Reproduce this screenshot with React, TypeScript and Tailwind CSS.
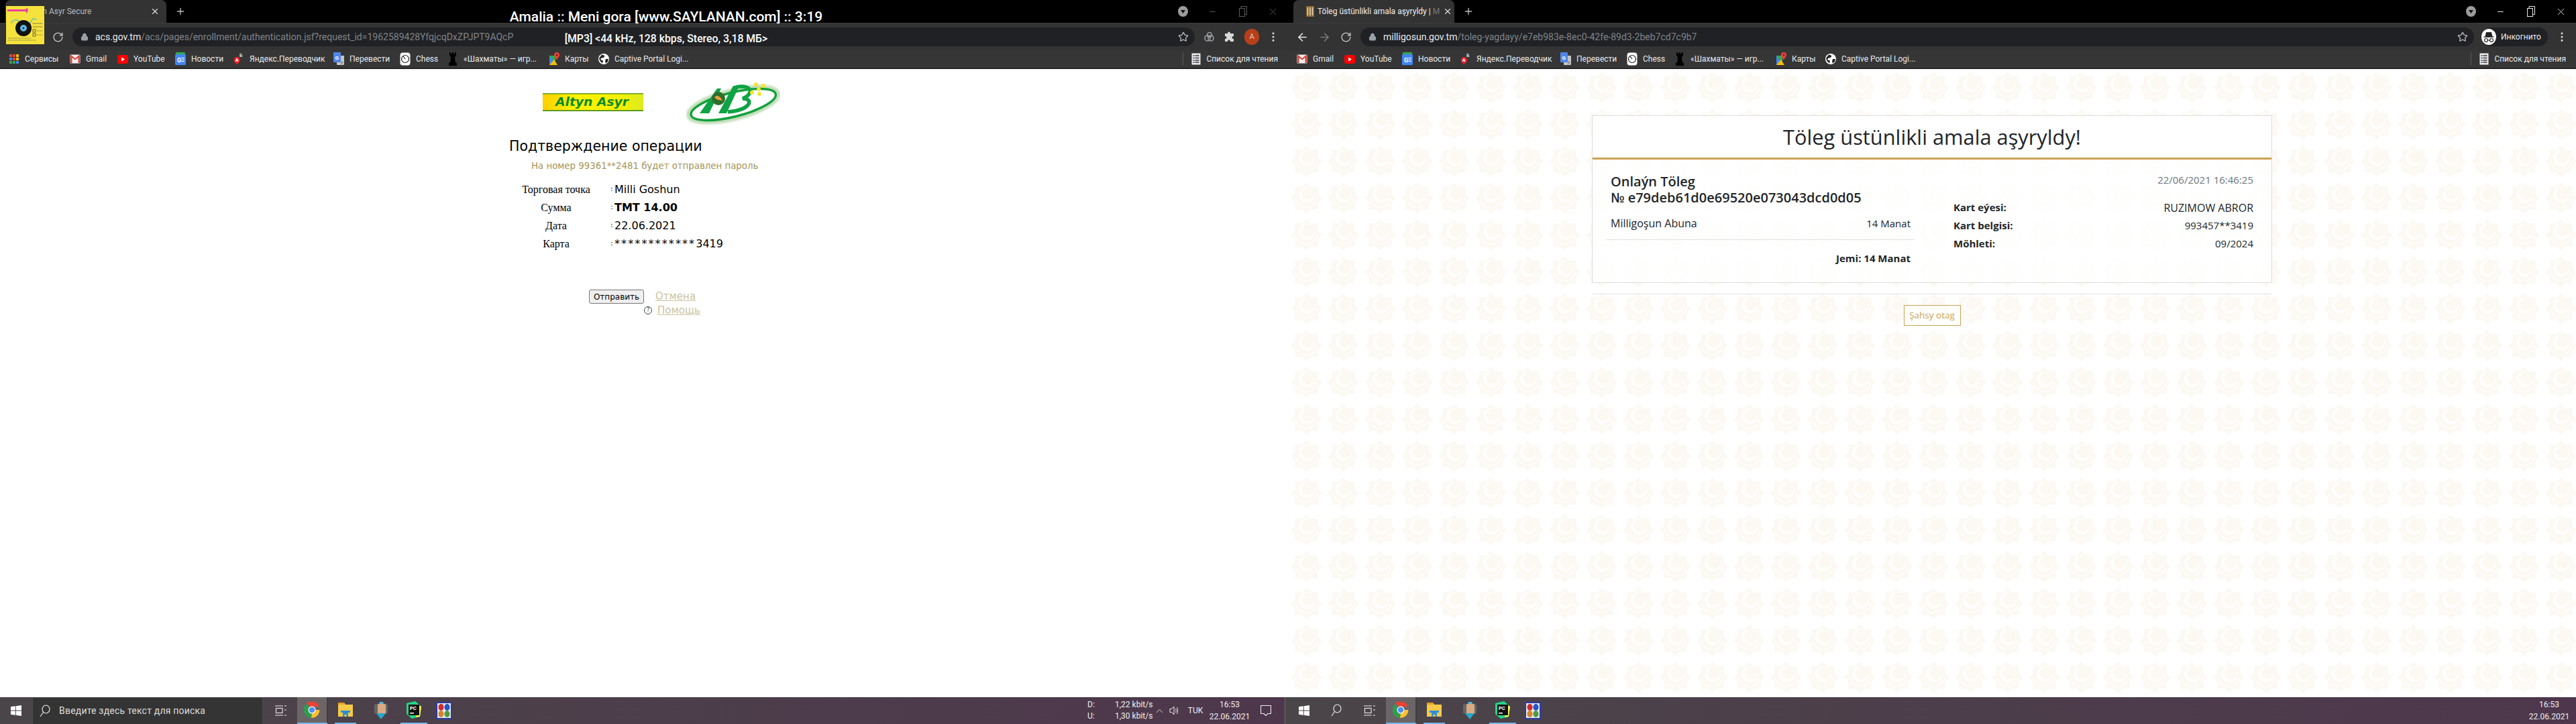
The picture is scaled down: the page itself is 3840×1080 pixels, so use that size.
import React from "react";
import { ArrowLeft, ArrowRight, RotateCw, Star, Lock, X, Plus, Minus, EllipsisVertical, ChevronUp } from "lucide-react";

const Apps = () => (
  <svg width="16" height="16" viewBox="0 0 16 16">
    {[["#ea4335", "#ea4335", "#fbbc05"], ["#4285f4", "#ea4335", "#fbbc05"], ["#34a853", "#34a853", "#4285f4"]].map((r, y) =>
      r.map((c, x) => <rect key={x} x={1 + x * 5} y={1 + y * 5} width="4" height="4" fill={c} />)
    )}
  </svg>
);
const Gmail = () => (
  <svg width="16" height="14" viewBox="0 0 16 14">
    <rect x="0.5" y="0.5" width="15" height="13" rx="1" fill="#f3eeee" />
    <path d="M1 1v12h2.5V5L8 8.5 12.5 5v8H15V1h-1L8 6 2 1z" fill="#d9453b" />
  </svg>
);
const YouTube = () => (
  <svg width="16" height="13" viewBox="0 0 16 13">
    <rect width="16" height="13" rx="3" fill="#f00" />
    <path d="M6.2 3.5 11 6.5l-4.8 3z" fill="#fff" />
  </svg>
);
const News = () => (
  <svg width="16" height="20" viewBox="0 0 16 20">
    <rect x="1" y="0" width="14" height="6" rx="1" fill="#34a853" />
    <rect y="3" width="16" height="16" rx="1.5" fill="#4285f4" />
    <text x="3" y="14.5" fontSize="9" fontWeight="700" fill="#fff" fontFamily="Roboto, sans-serif">G</text>
    <path d="M9.5 8.5h4.5M9.5 11h4.5M9.5 13.5h4.5" stroke="#fff" strokeWidth="1.2" />
  </svg>
);
const Yandex = () => (
  <svg width="18" height="20" viewBox="0 0 18 20">
    <path d="M6 6.5a5.2 5.2 0 0 1 5.2 5.2c0 3-3 5.3-5.2 8-2.2-2.700-5.200-5-5.200-8A5.200 5.200 0 0 1 6 6.500z" fill="#ed1c24" />
    <text x="3" y="14.500" fontSize="8" fontWeight="700" fill="#fff" fontFamily="Roboto, sans-serif">A</text>
    <text x="10" y="7" fontSize="8" fontWeight="700" fill="#ddd" fontFamily="Roboto, sans-serif">Б</text>
  </svg>
);
const GTranslate = () => (
  <svg width="16" height="20" viewBox="0 0 16 20">
    <rect x="5" y="5" width="11" height="14" rx="1" fill="#c5c5c5" />
    <rect y="0" width="11" height="15" rx="1" fill="#4f86ec" />
    <text x="2.500" y="10.500" fontSize="8" fontWeight="700" fill="#fff" fontFamily="Roboto, sans-serif">G</text>
    <text x="10" y="16.500" fontSize="5" fill="#666" fontFamily="'Noto Sans CJK SC', sans-serif">文</text>
  </svg>
);
const Chess = () => (
  <svg width="16" height="20" viewBox="0 0 16 20">
    <rect x="0.500" y="0.500" width="15" height="19" rx="4" fill="#fff" />
    <circle cx="8" cy="10" r="5.500" fill="none" stroke="#222" strokeWidth="1.200" />
    <path d="M8 10 5 6" stroke="#222" strokeWidth="1.200" />
  </svg>
);
const Rook = () => (
  <svg width="16" height="22" viewBox="0 0 16 22">
    <path d="M3 1h2v2h2V1h2v2h2V1h2v5l-2 2 .6 8H13l1 2v3H2v-3l1-2h1.400L5 8 3 6z" fill="#000" />
  </svg>
);
const Maps = () => (
  <svg width="16" height="20" viewBox="0 0 16 20">
    <path d="M1 5h9v14H1z" fill="#34a853" />
    <path d="M1 5l9 14H1z" fill="#4285f4" />
    <path d="M1 19l7-8 5 8z" fill="#fbbc05" />
    <path d="M12 0a4 4 0 0 1 4 4c0 2.500-2.500 4-4 8-1.500-4-4-5.500-4-8a4 4 0 0 1 4-4z" fill="#ea4335" />
    <circle cx="12" cy="4" r="1.400" fill="#7a1c14" />
  </svg>
);
const Globe = () => (
  <svg width="16" height="16" viewBox="0 0 16 16">
    <circle cx="8" cy="8" r="8" fill="#fff" />
    <path d="M5 1.500 9.500 3 8 6 4.500 6.500 3 9 7 10.500 6 14.500 2.500 11 1 7zM11 8h4l-1 4-3 2.500-1-3z" fill="#222" />
  </svg>
);
const ReadingList = () => (
  <svg width="14" height="18" viewBox="0 0 14 18">
    <rect x="0.500" y="0.500" width="13" height="17" fill="#e8eaed" />
    <path d="M2.500 4h2M5.500 4h6M2.500 7.500h2M5.500 7.500h6M2.500 11h2M5.500 11h6M2.500 14h2M5.500 14h6" stroke="#333" strokeWidth="1.300" />
  </svg>
);
const Cover = () => (
  <svg width="57" height="57" viewBox="0 0 57 57">
    <rect width="57" height="57" fill="#f5e23c" />
    <path d="M2 5h27l2-2 2 2-1 3-1 3-2-3H2z" fill="#ee3fa2" />
    <path d="M8 26c2-7 8-6 12-3M46 20l-6-1-5 8" fill="none" stroke="#49b8c9" strokeWidth="1.200" />
    <circle cx="26" cy="33" r="12" fill="#111" />
    <circle cx="26" cy="33" r="5" fill="#5cb6e0" />
    <circle cx="26" cy="33" r="1.200" fill="#111" />
    <path d="M40 26h15M40 31h15" stroke="#444" strokeWidth="1" strokeDasharray="1.500 1" />
    <rect x="40" y="35" width="4" height="4" fill="none" stroke="#333" strokeWidth=".7" />
    <rect x="40" y="41" width="4" height="4" fill="none" stroke="#333" strokeWidth=".7" />
    <path d="M46 37h9M46 43h9M3 48h34M3 51h42" stroke="#665" strokeWidth=".8" strokeDasharray="1.500 .8" />
  </svg>
);
const Favicon = () => (
  <svg width="12" height="16" viewBox="0 0 12 16">
    <rect width="12" height="16" fill="#8d6a33" />
    <path d="M2.500 2v12M6 2v12M9.500 2v12" stroke="#f0e4c8" strokeWidth="1.300" />
  </svg>
);
const ExtIcon = () => (
  <svg width="17" height="17" viewBox="0 0 17 17" fill="none" stroke="#9aa0a6" strokeWidth="1.600">
    <circle cx="6" cy="10" r="4" />
    <circle cx="11" cy="10" r="4" />
    <circle cx="9" cy="5" r="3.500" />
  </svg>
);
const Puzzle = () => (
  <svg width="16" height="16" viewBox="0 0 16 16">
    <path d="M5 2.500a2 2 0 0 1 4 0V3h5v4h-.5a2 2 0 0 0 0 4h.5v4H9v-.5a2 2 0 0 0-4 0v.5H1v-4h.5a2 2 0 0 0 0-4H1V3h4z" fill="#d8d8d8" />
  </svg>
);
const Restore = () => (
  <svg width="12" height="16" viewBox="0 0 12 16" fill="none" stroke="currentColor" strokeWidth="1">
    <rect x="0.500" y="3.500" width="8" height="12" />
    <path d="M3 3V.5h8.500v12H9" />
  </svg>
);
const TitleDrop = () => (
  <svg width="15" height="16" viewBox="0 0 15 16">
    <ellipse cx="7.500" cy="8" rx="7.500" ry="8" fill="#9c9c9c" />
    <path d="M4 6h7l-3.500 5z" fill="#111" />
  </svg>
);
const Incognito = () => (
  <svg width="22" height="24" viewBox="0 0 22 24">
    <ellipse cx="11" cy="12" rx="11" ry="12" fill="#fff" />
    <path d="M7 5h8l1.500 6.500h-11zM3.500 11.500h15v1.300h-15z" fill="#222" />
    <circle cx="7" cy="17" r="2.500" fill="none" stroke="#222" strokeWidth="1.200" />
    <circle cx="15" cy="17" r="2.500" fill="none" stroke="#222" strokeWidth="1.200" />
    <path d="M9.500 17h3" stroke="#222" />
  </svg>
);
const Win = () => (
  <svg width="16" height="16" viewBox="0 0 16 16">
    <path d="M0 2.300 6.800 1.300v6.300H0zM7.700 1.200 16 0v7.600H7.700zM0 8.500h6.800v6.300L0 13.800zM7.700 8.500H16V16l-8.300-1.200z" fill="#fff" />
  </svg>
);
const SearchIco = () => (
  <svg width="16" height="20" viewBox="0 0 16 20" fill="none" stroke="#eee" strokeWidth="1.100">
    <ellipse cx="9.500" cy="7" rx="5.500" ry="6" />
    <path d="M5.500 11.500 1 18" />
  </svg>
);
const TaskView = () => (
  <svg width="18" height="18" viewBox="0 0 18 18" fill="none" stroke="#eee" strokeWidth="1.100">
    <rect x="2.500" y="5.500" width="9.500" height="7" />
    <path d="M1 2h12M1 16h12M15 2h3M15 8h3M15 16h3" />
  </svg>
);
const ChromeIco = () => (
  <svg width="24" height="24" viewBox="0 0 24 24">
    <path d="M12 12 4 1.500A12 12 0 0 1 23 7H12z" fill="#ea4335" />
    <path d="M12 12h11.400A12 12 0 0 1 11 24z" fill="#fbc02d" />
    <path d="M12 12 11 24A12 12 0 0 1 4 3z" fill="#2e9e4f" />
    <circle cx="12" cy="12" r="5.500" fill="#fff" />
    <circle cx="12" cy="12" r="4.300" fill="#4f8df5" />
  </svg>
);
const Explorer = () => (
  <svg width="22" height="24" viewBox="0 0 22 24">
    <path d="M0 1h9l2 3h11v18H0z" fill="#f7c948" />
    <rect y="1" width="9" height="3" fill="#e8a020" />
    <path d="M7 22v-6h8v6h-2.500v-3h-3v3z" fill="#2a8fd8" />
    <rect x="4" y="13" width="14" height="3" fill="#2a8fd8" />
  </svg>
);
const Agent = () => (
  <svg width="22" height="26" viewBox="0 0 22 26">
    <path d="M9 0h5l1 3H8z" fill="#5ab4dc" />
    <rect x="1" y="3" width="20" height="15" rx="3" fill="#666" />
    <rect x="6" y="3" width="12" height="15" rx="2" fill="#d9a984" />
    <path d="M4 17h14l-7 9z" fill="#27a9c9" />
  </svg>
);
const PyCharm = () => (
  <svg width="24" height="26" viewBox="0 0 24 26">
    <path d="M1 3 14 0l9 8-2 15-12 3-8-7z" fill="#21d789" />
    <path d="M16 4l7 4-2 15-6 1z" fill="#fcf84a" />
    <rect x="4" y="5" width="16" height="16" fill="#111" />
    <text x="6" y="13" fontSize="7.500" fontWeight="700" fill="#fff" fontFamily="Roboto, sans-serif">PC</text>
    <rect x="6" y="17" width="6" height="1.500" fill="#fff" />
  </svg>
);
const Colors = () => (
  <svg width="24" height="26" viewBox="0 0 24 26">
    <rect width="24" height="26" rx="2" fill="#2d3aa8" />
    <rect x="2" y="2" width="20" height="22" fill="#e4e8ee" />
    <ellipse cx="7.500" cy="8" rx="4" ry="5" fill="#d42a2a" />
    <ellipse cx="16.500" cy="8" rx="4" ry="5" fill="#2456c8" />
    <ellipse cx="7.500" cy="18" rx="4" ry="5" fill="#d8822a" />
    <ellipse cx="16.500" cy="18" rx="4" ry="5" fill="#4f9a3d" />
  </svg>
);
const Speaker = () => (
  <svg width="16" height="16" viewBox="0 0 16 16" fill="none" stroke="#eee" strokeWidth="1">
    <path d="M1 5.500h2.500L7 2v12l-3.500-3.500H1zM9.500 5c1 2 1 4 0 6M11.500 3c1.500 3 1.500 7 0 10" />
  </svg>
);
const Notif = () => (
  <svg width="16" height="16" viewBox="0 0 16 16" fill="none" stroke="#eee" strokeWidth="1.100">
    <path d="M.5.500h15v12h-4.500L8 15.500 5 12.500H.5z" />
  </svg>
);
const AltynBanner = () => (
  <svg className="block" width="150" height="27" viewBox="0 0 150 27">
    <defs>
      <linearGradient id="ay" x1="0" x2="1" y1="0" y2="0">
        <stop offset="0" stopColor="#ffcf00" />
        <stop offset="0.3" stopColor="#fff200" />
        <stop offset="0.75" stopColor="#f6f000" />
        <stop offset="1" stopColor="#dcec20" />
      </linearGradient>
    </defs>
    <rect width="150" height="27" fill="url(#ay)" />
    <rect width="150" height="1.500" fill="#5d9a1f" />
    <rect y="25" width="150" height="2" fill="#5d9a1f" />
    <text x="19" y="19" fontSize="17" fontWeight="700" fontStyle="italic" fill="#0a8a2c" fontFamily="'DejaVu Sans', sans-serif" textLength="109" lengthAdjust="spacingAndGlyphs">Altyn Asyr</text>
  </svg>
);
const BankLogo = () => (
  <svg className="block" width="140" height="65" viewBox="0 0 140 65">
    <defs>
      <filter id="gl"><feGaussianBlur stdDeviation="1.500" /></filter>
    </defs>
    <g transform="rotate(-14 70 33)">
      <ellipse cx="70" cy="34" rx="69" ry="21" fill="none" stroke="#bfdcb6" strokeWidth="6" filter="url(#gl)" />
      <ellipse cx="70" cy="34" rx="65" ry="18" fill="none" stroke="#12a03c" strokeWidth="3.500" />
    </g>
    <path d="M20 47 46 10h6L34 47z" fill="#0ea344" />
    <path d="M48 47 70 6h9L60 47z" fill="#0ea344" />
    <path d="M74 8C98 3 102 18 84 25C101 25 97 42 62 45" fill="none" stroke="#0ea344" strokeWidth="5.500" />
    <circle cx="48" cy="25" r="10" fill="#2f6d2c" />
    <path d="M42 23c4-4 8-2 12 5-4-1-8 0-12-5z" fill="#e8a23a" />
    <g fill="#f6e62a">
      <circle cx="104" cy="4" r="3" />
      <circle cx="115" cy="6" r="3" />
      <circle cx="108" cy="11" r="3" />
      <circle cx="98" cy="16" r="3" />
      <circle cx="109" cy="18" r="3" />
    </g>
  </svg>
);

const bookmarkList = [
  { i: <Gmail />, t: "Gmail", w: "w-[71px]" },
  { i: <YouTube />, t: "YouTube", w: "w-[86px]" },
  { i: <News />, t: "Новости", w: "w-[87px]" },
  { i: <Yandex />, t: "Яндекс.Переводчик", w: "w-[149px]" },
  { i: <GTranslate />, t: "Перевести", w: "w-[99px]" },
  { i: <Chess />, t: "Chess", w: "w-[71px]" },
  { i: <Rook />, t: "«Шахматы» — игр...", w: "w-[151px]" },
  { i: <Maps />, t: "Карты", w: "w-[74px]" },
  { i: <Globe />, t: "Captive Portal Logi...", w: "w-[135px]" },
];

function Bookmark({ icon, text, w }: { icon: React.ReactNode; text: string; w: string }) {
  return (
    <div className={`${w} flex items-center gap-2 shrink-0`}>
      <span className="w-4 flex justify-center shrink-0">{icon}</span>
      <span className="whitespace-nowrap">{text}</span>
    </div>
  );
}

function Chrome({ right }: { right: boolean }) {
  const ctl = right ? "text-[#e8e8e8]" : "text-[#5c5c5c]";
  return (
    <div className="h-[103px] shrink-0 flex flex-col font-['Roboto',sans-serif] text-[#e8eaed]">
      <div className="h-[34px] bg-black flex items-stretch">
        <div className={`ml-[8px] w-[240px] rounded-t-[8px] bg-[#333333] flex items-center text-[12px] ${right ? "pl-[19px] text-[#eeeeee]" : "pl-[35px] text-[#b8b8b8]"}`}>
          {right && <span className="mr-[5px] shrink-0"><Favicon /></span>}
          <span className="whitespace-nowrap flex-1">
            {right ? <>Töleg üstünlikli amala aşyryldy | <span className="text-[#777777]">M</span></> : "Altyn Asyr Secure"}
          </span>
          <X size={14} className="mr-[10px] ml-[5px] shrink-0 text-[#dddddd]" />
        </div>
        <Plus size={16} className="ml-[13px] self-center text-[#bdbdbd]" />
        <div className={`ml-auto flex items-center ${ctl}`}>
          <TitleDrop />
          <Minus size={13} className="ml-[30px]" />
          <span className="ml-[33px]"><Restore /></span>
          <X size={17} className="ml-[30px] mr-[14px]" strokeWidth={1.2} />
        </div>
      </div>
      <div className="h-[41px] bg-[#333333] border-t border-[#3d3d3d] flex items-center">
        <ArrowLeft size={19} className={`ml-[12px] ${right ? "text-[#e8eaed]" : "text-[#333333]"}`} />
        <ArrowRight size={19} className="ml-[14px] text-[#7a7a7a]" />
        <RotateCw size={17} className="ml-[14px] text-[#c4c4c4]" />
        <div className={`ml-[13px] h-[28px] bg-[#202124] rounded-full flex items-center text-[14px] pl-[12px] ${right ? "w-[1660px]" : "w-[1673px]"}`}>
          <Lock size={12} className="text-[#9aa0a6] mr-[10px]" fill="#9aa0a6" />
          <span className="whitespace-nowrap">
            {right ? "milligosun.gov.tm" : "acs.gov.tm"}
            <span className="text-[#7f8388]">
              {right ? "/toleg-yagdayy/e7eb983e-8ec0-42fe-89d3-2beb7cd7c9b7" : "/acs/pages/enrollment/authentication.jsf?request_id=1962589428YfqjcqDxZPJPT9AQcP"}
            </span>
          </span>
          <Star size={16} className="ml-auto mr-[9px] text-[#b8b8b8]" />
        </div>
        {right ? (
          <>
            <div className="ml-[11px] w-[99px] h-[28px] rounded-full bg-[#202124] flex items-center gap-[7px] text-[12px]">
              <Incognito />
              <span>Инкогнито</span>
            </div>
            <EllipsisVertical size={18} className="ml-[12px] text-[#dddddd]" />
          </>
        ) : (
          <>
            <span className="ml-[13px]"><ExtIcon /></span>
            <span className="ml-[14px]"><Puzzle /></span>
            <span className="ml-[14px] w-[22px] h-[24px] rounded-full bg-[#b5401b] text-[11px] flex items-center justify-center text-[#f0c8b8]">A</span>
            <EllipsisVertical size={18} className="ml-[12px] text-[#dddddd]" />
          </>
        )}
      </div>
      <div className="flex-1 bg-[#363636] border-b-2 border-[#262626] flex items-center text-[12px] pl-[13px]">
        {!right && <Bookmark icon={<Apps />} text="Сервисы" w="w-[91px]" />}
        {bookmarkList.map((b) => <Bookmark key={b.t} icon={b.i} text={b.t} w={b.w} />)}
        <div className="ml-auto h-[20px] border-l border-[#5a5a5a] pl-[12px] pr-[15px] flex items-center gap-[8px]">
          <ReadingList />
          <span className="whitespace-nowrap">Список для чтения</span>
        </div>
      </div>
    </div>
  );
}

function Taskbar({ right }: { right: boolean }) {
  return (
    <div className="h-[40px] shrink-0 flex items-stretch bg-linear-to-r from-[#4a4549] to-[#4e374c] font-['Roboto',sans-serif] text-[12px] text-[#eeeeee]">
      <div className="w-[48px] flex items-center justify-center"><Win /></div>
      {right ? (
        <div className="w-[47px] flex items-center justify-center"><SearchIco /></div>
      ) : (
        <div className="w-[344px] bg-[#343434] border border-[#4d4d4d] border-b-0 flex items-center pl-[10px] gap-[13px] text-[14px] text-[#dddddd]">
          <SearchIco />
          <span className="whitespace-nowrap tracking-[0.2px]">Введите здесь текст для поиска</span>
        </div>
      )}
      <div className="w-[51px] flex items-center justify-center"><TaskView /></div>
      <div className="w-[46px] bg-[#6b6568] border-r-2 border-[#3e3e3e] border-b-2 border-b-[#76b9ed] flex items-center justify-center"><ChromeIco /></div>
      <div className="ml-[10px] w-[32px] border-b-2 border-[#76b9ed] flex items-center justify-center"><Explorer /></div>
      <div className="ml-[21px] w-[32px] flex items-center justify-center"><Agent /></div>
      <div className="ml-[13px] w-[40px] border-b-2 border-[#76b9ed] flex items-center justify-center"><PyCharm /></div>
      <div className="ml-[9px] w-[32px] flex items-center justify-center"><Colors /></div>
      <div className={`ml-auto flex items-center ${right ? "mr-[7px]" : ""}`}>
        {!right && (
          <>
            <div className="w-[46px] pl-[5px] leading-[17px]"><div>D:</div><div>U:</div></div>
            <div className="w-[56px] leading-[17px] whitespace-nowrap"><div>1,22 kbit/s</div><div>1,30 kbit/s</div></div>
            <div className="w-[20px] flex justify-center"><ChevronUp size={17} strokeWidth={1.2} /></div>
            <div className="w-[26px] flex justify-center"><Speaker /></div>
            <div className="w-[36px] text-center">TUK</div>
          </>
        )}
        <div className="w-[66px] text-center leading-[18px]"><div>16:53</div><div>22.06.2021</div></div>
        {!right && (
          <>
            <div className="w-[42px] flex justify-center"><Notif /></div>
            <div className="w-[7px]" />
            <div className="w-[5px] h-[40px] border-l border-[#6a6a6a] bg-[#4a4549]" />
          </>
        )}
      </div>
    </div>
  );
}

function LeftPage() {
  const rows: [string, React.ReactNode, string][] = [
    ["Торговая точка", "Milli Goshun", ""],
    ["Сумма", "TMT 14.00", "font-bold"],
    ["Дата", "22.06.2021", ""],
    ["Карта", <><span className="tracking-[2.1px]">************</span>3419</>, ""],
  ];
  return (
    <div className="flex-1 bg-white pl-[759px] pt-[19px] text-black font-['DejaVu_Sans',sans-serif]">
      <div className="flex h-[65px]">
        <div className="ml-[50px] mt-[17px]"><AltynBanner /></div>
        <div className="ml-[64px]"><BankLogo /></div>
      </div>
      <div className="mt-[19px] h-[24px] leading-[24px] text-[20.500px] whitespace-nowrap">Подтверждение операции</div>
      <div className="mt-[10px] ml-[33px] h-[16px] leading-[16px] text-[13.330px] text-[#a4955a] whitespace-nowrap">На номер 99361**2481 будет отправлен пароль</div>
      <div className="mt-[13px]">
        {rows.map(([k, v, c]) => (
          <div key={k} className="h-[27px] flex items-center">
            <div className="w-[140px] text-center font-['Liberation_Serif',serif] text-[16px]">{k}</div>
            <div className="ml-[11px] w-[6px] text-[11px]">:</div>
            <div className={`text-[16px] whitespace-nowrap ${c}`}>{v}</div>
          </div>
        ))}
      </div>
      <div className="mt-[55px] ml-[119px] flex items-center h-[21px]">
        <button className="w-[82px] h-[21px] border border-[#767676] rounded-[3px] bg-[#efefef] text-[12px] text-black">Отправить</button>
        <a className="ml-[17px] text-[#cbc39c] underline text-[15px]">Отмена</a>
      </div>
      <div className="ml-[201px] h-[20px] flex items-center">
        <span className="w-[12px] h-[12px] rounded-full border border-[#444] text-[8px] leading-[10px] text-center text-[#444]">?</span>
        <a className="ml-[8px] text-[#cbc39c] underline text-[15px]">Помощь</a>
      </div>
    </div>
  );
}

function RightPage() {
  return (
    <div className="flex-1 relative bg-white font-['Open_Sans',sans-serif] text-[#212529] overflow-hidden">
      <svg className="absolute inset-0 w-full h-full">
        <defs>
          <pattern id="tm" width="55" height="55" patternUnits="userSpaceOnUse">
            <g transform="translate(27.500 27.500)">
              <rect x="-17" y="-17" width="34" height="34" fill="#fcf9f3" />
              <rect x="-16.500" y="-16.500" width="33" height="33" fill="#fcf9f3" transform="rotate(45)" />
              <path fillRule="evenodd" d="M.7 -17.300a12.300 12.300 0 1 1 -.01 0zM2.700 -16.200a9.500 9.500 0 1 0 .01 0z" fill="#fffefc" />
              <g fill="#fffefc">
                <circle cx="-8" cy="-11" r="1.500" />
                <circle cx="-4.500" cy="-12" r="1.500" />
                <circle cx="-10" cy="-7" r="1.500" />
                <circle cx="-9" cy="-3" r="1.500" />
              </g>
              <path d="M-16 1C-14 9-7 13 -1 14M16 1C14 9 7 13 1 14" fill="none" stroke="#fffefc" strokeWidth="2.400" strokeDasharray="2.500 .8" />
            </g>
          </pattern>
        </defs>
        <rect width="100%" height="100%" fill="url(#tm)" />
      </svg>
      <div className="relative ml-[453px] w-[1014px] pt-[69px]">
        <div className="h-[250px] border border-[#dddddd] flex flex-col">
          <div className="h-[65px] shrink-0 bg-white border-b-[3px] border-[#c9a352] flex items-center justify-center text-[30.800px] font-medium whitespace-nowrap">Töleg üstünlikli amala aşyryldy!</div>
          <div className="flex-1 bg-white/75 flex">
            <div className="ml-[20px] w-[460px]">
              <div className="pt-[21px] px-[7px] text-[20px] font-semibold leading-[24px]">
                <div>Onlaýn Töleg</div>
                <div className="whitespace-nowrap">№ e79deb61d0e69520e073043dcd0d05</div>
              </div>
              <div className="mt-[14px] px-[7px] pr-[6px] flex justify-between items-center text-[15px] leading-[24px]">
                <span className="text-[16px]">Milligoşun Abuna</span>
                <span>14 Manat</span>
              </div>
              <div className="mt-[12px] h-px bg-[#e0e0e0]" />
              <div className="mt-[15px] pr-[6px] text-right font-bold text-[15px] leading-[24px]">Jemi: 14 Manat</div>
            </div>
            <div className="ml-[58px] w-[447px]">
              <div className="pt-[18px] text-right text-[#6c757d] text-[15px] leading-[24px]">22/06/2021 16:46:25</div>
              <div className="mt-[16px] text-[15px]">
                {[["Kart eýesi:", "RUZIMOW ABROR", "text-[16px]"], ["Kart belgisi:", "993457**3419", ""], ["Möhleti:", "09/2024", ""]].map(([k, v, c]) => (
                  <div key={k} className="h-[27px] flex justify-between items-center">
                    <span className="font-bold">{k}</span>
                    <span className={c}>{v}</span>
                  </div>
                ))}
              </div>
            </div>
          </div>
        </div>
        <div className="mt-[16px] h-px bg-[#e2e2e2]" />
        <div className="mt-[16px] mx-auto w-[85px] h-[31px] border border-[#c9a352] flex items-center justify-center text-[13.500px] text-[#c9a352] whitespace-nowrap bg-white/40">Şahsy otag</div>
      </div>
    </div>
  );
}

function Half({ right }: { right: boolean }) {
  return (
    <div className="relative w-[1920px] h-[1080px] flex flex-col">
      <Chrome right={right} />
      {right ? <RightPage /> : <LeftPage />}
      <Taskbar right={right} />
    </div>
  );
}

export default function App() {
  return (
    <div className="relative flex w-[3840px] h-[1080px] overflow-hidden">
      <Half right={false} />
      <Half right />
      <div className="absolute left-[9px] top-[9px]"><Cover /></div>
      <div className="absolute left-[693px] top-[10px] w-[600px] text-center text-white font-['Roboto',sans-serif] font-medium text-[21px] leading-[30px]">Amalia :: Meni gora [www.SAYLANAN.com] :: 3:19</div>
      <div className="absolute left-[693px] top-[48px] w-[600px] text-center text-white font-['Roboto',sans-serif] font-medium text-[15.800px] leading-[20px]">[MP3] &lt;44 kHz, 128 kbps, Stereo, 3,18 МБ&gt;</div>
    </div>
  );
}
